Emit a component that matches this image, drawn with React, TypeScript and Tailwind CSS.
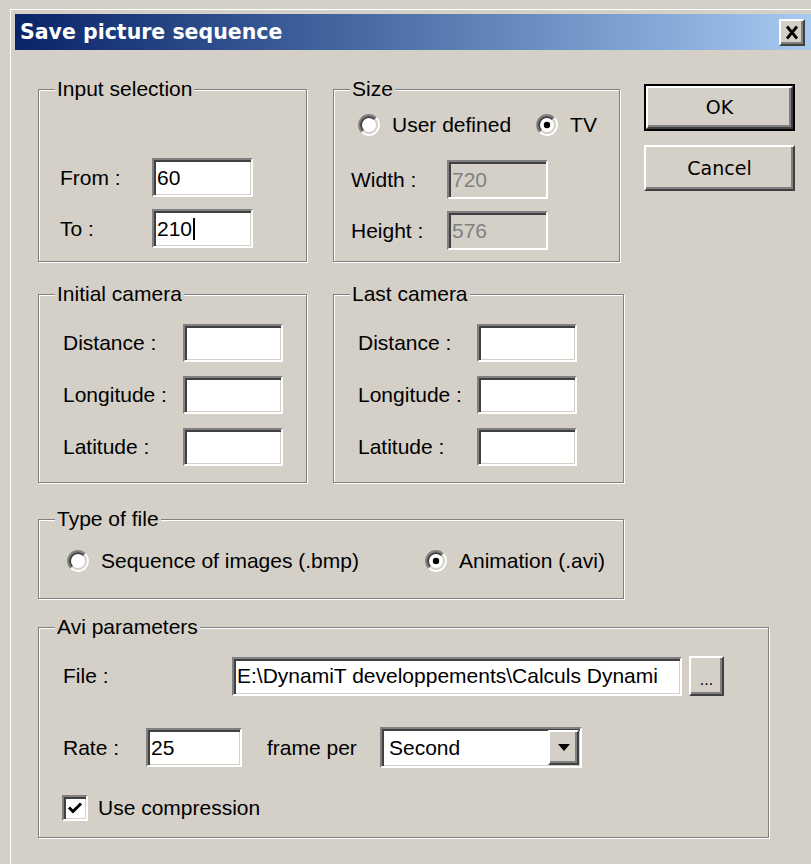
import React from "react";

const sunken =
  "border-2 border-t-[#808080] border-l-[#808080] border-r-white border-b-white shadow-[inset_2px_2px_0_#404040,inset_-1px_-1px_0_#d4d0c8]";
const raised =
  "border-2 border-t-white border-l-white border-r-[#404040] border-b-[#404040] shadow-[inset_-2px_-2px_0_#808080]";

function Group({
  label,
  className,
  children,
}: {
  label: string;
  className: string;
  children?: React.ReactNode;
}) {
  return (
    <div
      className={`relative shrink-0 border border-[#808080] shadow-[1px_1px_0_#fff,inset_1px_1px_0_#fff] ${className}`}
    >
      <span className="absolute left-[16px] top-[-13px] bg-[#d4d0c8] px-[2px] leading-[24px] whitespace-nowrap">
        {label}
      </span>
      {children}
    </div>
  );
}

function Field({
  value,
  className,
  disabled,
  caret,
}: {
  value?: string;
  className: string;
  disabled?: boolean;
  caret?: boolean;
}) {
  return (
    <div
      className={`${sunken} ${
        disabled ? "bg-[#d4d0c8] text-[#808080]" : "bg-white text-black"
      } flex shrink-0 items-center overflow-hidden whitespace-nowrap pl-[3px] leading-[24px] ${className}`}
    >
      {value}
      {caret && <span className="ml-[1px] inline-block h-[22px] w-[2px] bg-black" />}
    </div>
  );
}

function Radio({ checked }: { checked?: boolean }) {
  return (
    <svg width="22" height="22" viewBox="0 0 22 22" className="shrink-0">
      <circle cx="11" cy="11" r="8" fill="#fff" />
      <path d="M3.93 18.07 A10 10 0 0 1 18.07 3.93" fill="none" stroke="#808080" strokeWidth="2" />
      <path d="M18.07 3.93 A10 10 0 0 1 3.93 18.07" fill="none" stroke="#ffffff" strokeWidth="2" />
      <path d="M5.34 16.66 A8 8 0 0 1 16.66 5.34" fill="none" stroke="#404040" strokeWidth="2" />
      <path d="M16.66 5.34 A8 8 0 0 1 5.34 16.66" fill="none" stroke="#d4d0c8" strokeWidth="2" />
      {checked && <circle cx="11" cy="11" r="3.2" fill="#000" />}
    </svg>
  );
}

function RadioOption({
  label,
  checked,
  className,
}: {
  label: string;
  checked?: boolean;
  className?: string;
}) {
  return (
    <div className={`flex items-center gap-[12px] ${className ?? ""}`}>
      <Radio checked={checked} />
      <span className="leading-[24px] whitespace-nowrap">{label}</span>
    </div>
  );
}

function Row({
  label,
  labelW,
  children,
  className,
}: {
  label: string;
  labelW: string;
  children: React.ReactNode;
  className?: string;
}) {
  return (
    <div className={`flex items-center ${className ?? ""}`}>
      <span className={`${labelW} shrink-0 leading-[24px] whitespace-nowrap`}>{label}</span>
      {children}
    </div>
  );
}

export default function App() {
  return (
    <div className="relative h-[864px] w-[811px] overflow-hidden bg-[#d4d0c8] pl-[10px] pt-[9px] font-[family-name:Liberation_Sans,Arial,sans-serif] text-[21px] text-black">
      <div className="h-full border-l border-t border-white pl-[4px] pt-[4px]">
        {/* caption bar */}
        <div className="flex h-[36px] items-center justify-between bg-linear-to-r from-[#0a246a] to-[#a6caf0] pl-[5px] pr-[6px]">
          <span className="font-[family-name:DejaVu_Sans,sans-serif] text-[20.5px] font-bold leading-[24px] text-white">
            Save picture sequence
          </span>
          <div className={`${raised} flex h-[27px] w-[26px] items-center justify-center bg-[#d4d0c8]`}>
            <svg width="14" height="15" viewBox="0 0 14 15">
              <path d="M2 1.5 L12 13.5 M12 1.5 L2 13.5" stroke="#000" strokeWidth="2.8" />
            </svg>
          </div>
        </div>

        {/* dialog body */}
        <div className="flex flex-col pl-[23px]">
          {/* first row */}
          <div className="mt-[34px] flex items-start">
            <Group label="Input selection" className="mt-[5px] h-[173px] w-[269px]">
              <div className="flex flex-col gap-[12px] pl-[21px] pt-[68px]">
                <Row label="From :" labelW="w-[92px]">
                  <Field value="60" className="h-[39px] w-[101px]" />
                </Row>
                <Row label="To :" labelW="w-[92px]">
                  <Field value="210" caret className="h-[39px] w-[101px]" />
                </Row>
              </div>
            </Group>

            <Group label="Size" className="ml-[26px] mt-[5px] h-[173px] w-[287px]">
              <div className="flex items-center pl-[24px] pt-[23px]">
                <RadioOption label="User defined" />
                <RadioOption label="TV" checked className="ml-[25px]" />
              </div>
              <div className="mt-[23px] flex flex-col gap-[12px] pl-[17px]">
                <Row label="Width :" labelW="w-[96px]">
                  <Field value="720" disabled className="h-[39px] w-[101px]" />
                </Row>
                <Row label="Height :" labelW="w-[96px]">
                  <Field value="576" disabled className="h-[39px] w-[101px]" />
                </Row>
              </div>
            </Group>

            <div className="ml-[24px] flex w-[151px] flex-col gap-[14px] font-[family-name:DejaVu_Sans,sans-serif] text-[19px]">
              <div className="h-[47px] border-2 border-black">
                <div className={`${raised} flex h-full items-center justify-center bg-[#d4d0c8]`}>
                  OK
                </div>
              </div>
              <div className={`${raised} flex h-[46px] items-center justify-center bg-[#d4d0c8]`}>
                Cancel
              </div>
            </div>
          </div>

          {/* camera row */}
          <div className="mt-[32px] flex items-start">
            <Group label="Initial camera" className="h-[189px] w-[269px]">
              <div className="flex flex-col gap-[14px] pl-[24px] pt-[29px]">
                <Row label="Distance :" labelW="w-[120px]">
                  <Field className="h-[38px] w-[100px]" />
                </Row>
                <Row label="Longitude :" labelW="w-[120px]">
                  <Field className="h-[38px] w-[100px]" />
                </Row>
                <Row label="Latitude :" labelW="w-[120px]">
                  <Field className="h-[38px] w-[100px]" />
                </Row>
              </div>
            </Group>
            <Group label="Last camera" className="ml-[26px] h-[189px] w-[291px]">
              <div className="flex flex-col gap-[14px] pl-[24px] pt-[29px]">
                <Row label="Distance :" labelW="w-[119px]">
                  <Field className="h-[38px] w-[100px]" />
                </Row>
                <Row label="Longitude :" labelW="w-[119px]">
                  <Field className="h-[38px] w-[100px]" />
                </Row>
                <Row label="Latitude :" labelW="w-[119px]">
                  <Field className="h-[38px] w-[100px]" />
                </Row>
              </div>
            </Group>
          </div>

          {/* file type */}
          <Group label="Type of file" className="mt-[36px] h-[80px] w-[586px]">
            <div className="flex items-center pl-[28px] pt-[29px]">
              <RadioOption label="Sequence of images (.bmp)" className="w-[358px]" />
              <RadioOption label="Animation (.avi)" checked />
            </div>
          </Group>

          {/* avi options */}
          <Group label="Avi parameters" className="mt-[28px] h-[211px] w-[731px]">
            <div className="flex flex-col pl-[24px] pt-[28px]">
              <Row label="File :" labelW="w-[169px]">
                <Field
                  value="E:\DynamiT developpements\Calculs Dynami"
                  className="h-[39px] w-[450px]"
                />
                <div
                  className={`${raised} ml-[7px] flex h-[40px] w-[35px] shrink-0 items-end justify-center bg-[#d4d0c8] pb-[6px] text-[16px] leading-none`}
                >
                  ...
                </div>
              </Row>
              <Row label="Rate :" labelW="w-[83px]" className="mt-[31px]">
                <Field value="25" className="h-[39px] w-[96px]" />
                <span className="ml-[25px] w-[113px] shrink-0 leading-[24px]">frame per</span>
                <div className={`${sunken} flex h-[41px] w-[202px] shrink-0 items-center bg-white`}>
                  <span className="flex-1 pl-[7px] leading-[24px]">Second</span>
                  <div
                    className={`${raised} mr-[1px] flex h-[35px] w-[31px] items-center justify-center bg-[#d4d0c8]`}
                  >
                    <svg width="12" height="7" viewBox="0 0 12 7">
                      <path d="M0 0 H12 L6 7 Z" fill="#000" />
                    </svg>
                  </div>
                </div>
              </Row>
              <div className="ml-[-1px] mt-[27px] flex items-center gap-[10px]">
                <div className={`${sunken} flex h-[26px] w-[26px] items-center justify-center bg-white`}>
                  <svg width="16" height="14" viewBox="0 0 16 14">
                    <path d="M2 6.5 L6 10.5 L14 2.5" fill="none" stroke="#000" strokeWidth="3" />
                  </svg>
                </div>
                <span className="leading-[24px]">Use compression</span>
              </div>
            </div>
          </Group>
        </div>
      </div>
    </div>
  );
}
